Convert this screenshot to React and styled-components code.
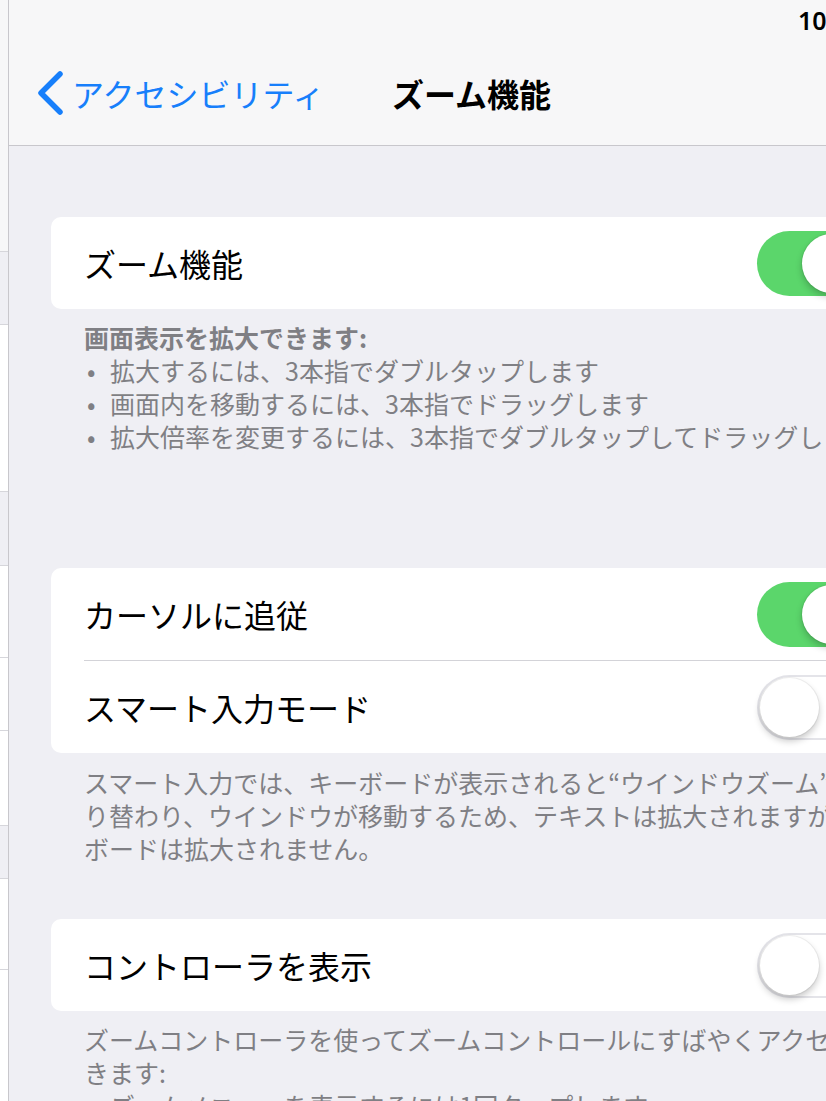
import React from 'react';
import styled, { createGlobalStyle } from 'styled-components';

const ios = {
    blue: '#177ffb',
    green: '#5bd66b',
    navBg: '#f7f7f8',
    groupBg: '#efeff4',
    line: '#c8c7cc',
    footer: '#7f7f84',
};

const GlobalStyle = createGlobalStyle`
    html, body {
        margin: 0;
        padding: 0;
        overflow: hidden;
        background: ${ios.groupBg};
    }
    body {
        font-family: "Noto Sans CJK JP", "Noto Sans", sans-serif;
        -webkit-font-smoothing: antialiased;
    }
`;

/* Whole screen: the thin master list on the left, detail pane on the right */
const Screen = styled.div`
    display: flex;
    height: 1101px;
    overflow: hidden;
`;

const MasterStrip = styled.div`
    flex: 0 0 8px;
    display: flex;
    flex-direction: column;
    border-right: 1px solid ${ios.line};
    background: #fff;
`;

const StripBlock = styled.div`
    box-sizing: border-box;
    height: ${(p) => p.$h}px;
    flex: 0 0 auto;
    background: ${(p) => p.$bg};
    border-bottom: 1px solid #d6d6db;
`;

const DetailPane = styled.div`
    flex: 0 0 925px;
    min-width: 0;
    overflow: hidden;
    display: flex;
    flex-direction: column;
    background: ${ios.groupBg};
`;

/* Navigation bar */
const NavBar = styled.header`
    box-sizing: border-box;
    height: 146px;
    background: ${ios.navBg};
    border-bottom: 1px solid ${ios.line};
    display: flex;
    flex-direction: column;
`;

const StatusRow = styled.div`
    height: 40px;
    display: flex;
    align-items: center;
    padding-left: 789px;
    font-family: "Noto Sans", "Liberation Sans", sans-serif;
    font-weight: 600;
    font-size: 25px;
    color: #000;
    white-space: nowrap;
`;

const NavRow = styled.div`
    height: 105px;
    display: grid;
    grid-template-columns: 1fr auto 1fr;
    align-items: center;
`;

const BackButton = styled.div`
    display: flex;
    align-items: center;
    gap: 8px;
    padding-left: 27px;
    color: ${ios.blue};
    font-size: 32px;
    white-space: nowrap;
`;

const NavTitle = styled.h1`
    margin: 0;
    font-size: 32px;
    font-weight: 700;
    color: #000;
    white-space: nowrap;
`;

/* Grouped table */
const Content = styled.main`
    padding: 71px 42px 0;
    display: flex;
    flex-direction: column;
    min-width: 0;
`;

const Card = styled.section`
    background: #fff;
    border-radius: 10px;
    overflow: hidden;
`;

const Row = styled.div`
    height: 92px;
    display: flex;
    align-items: center;
    justify-content: space-between;
    padding: 0 28px 0 33px;
`;

const RowLabel = styled.span`
    font-size: 32px;
    color: #000;
    white-space: nowrap;
`;

const Separator = styled.div`
    height: 1px;
    margin-left: 33px;
    background: #d3d3d8;
`;

const Footer = styled.div`
    padding: ${(p) => p.$top}px 33px 0;
    margin-bottom: ${(p) => p.$gap}px;
    min-width: 0;
    overflow: hidden;
    font-size: 25px;
    line-height: 33px;
    color: ${ios.footer};
`;

const FooterLine = styled.div`
    white-space: nowrap;
    font-weight: ${(p) => (p.$bold ? 700 : 400)};
`;

const Bullet = styled.div`
    display: flex;
    white-space: nowrap;

    &::before {
        content: '•';
        flex: 0 0 26px;
        padding-left: 3px;
        box-sizing: border-box;
    }
`;

/* Switch */
const Track = styled.div`
    box-sizing: border-box;
    flex: 0 0 107px;
    height: 65px;
    border-radius: 33px;
    padding: 3px;
    display: flex;
    justify-content: ${(p) => (p.$on ? 'flex-end' : 'flex-start')};
    background: ${(p) => (p.$on ? ios.green : '#fff')};
    box-shadow: ${(p) => (p.$on ? 'none' : 'inset 0 0 0 2px #e4e4e9')};
`;

const Knob = styled.div`
    width: 59px;
    height: 59px;
    border-radius: 50%;
    background: #fff;
    box-shadow: 0 4px 7px rgba(0, 0, 0, 0.22), 0 0 0 1px rgba(0, 0, 0, 0.05);
`;

const Toggle = ({ on }) => (
    <Track $on={on}>
        <Knob />
    </Track>
);

const Chevron = () => (
    <svg width="28" height="44" viewBox="0 0 28 44">
        <path
            d="M24 3 L5 22 L24 41"
            fill="none"
            stroke={ios.blue}
            strokeWidth="5.5"
            strokeLinecap="round"
            strokeLinejoin="round"
        />
    </svg>
);

const stripBlocks = [
    { h: 252, bg: ios.navBg },
    { h: 73, bg: ios.groupBg },
    { h: 167, bg: '#fff' },
    { h: 74, bg: ios.groupBg },
    { h: 92, bg: '#fff' },
    { h: 73, bg: '#fff' },
    { h: 95, bg: '#fff' },
    { h: 53, bg: ios.groupBg },
    { h: 91, bg: '#fff' },
];

export default function App() {
    return (
        <>
            <GlobalStyle />
            <Screen>
                <MasterStrip>
                    {stripBlocks.map((b, i) => (
                        <StripBlock key={i} $h={b.h} $bg={b.bg} />
                    ))}
                </MasterStrip>
                <DetailPane>
                    <NavBar>
                        <StatusRow>10:41</StatusRow>
                        <NavRow>
                            <BackButton>
                                <Chevron />
                                アクセシビリティ
                            </BackButton>
                            <NavTitle>ズーム機能</NavTitle>
                            <div />
                        </NavRow>
                    </NavBar>
                    <Content>
                        <Card>
                            <Row>
                                <RowLabel>ズーム機能</RowLabel>
                                <Toggle on />
                            </Row>
                        </Card>
                        <Footer $top={12} $gap={115}>
                            <FooterLine $bold>画面表示を拡大できます:</FooterLine>
                            <Bullet>拡大するには、3本指でダブルタップします</Bullet>
                            <Bullet>画面内を移動するには、3本指でドラッグします</Bullet>
                            <Bullet>拡大倍率を変更するには、3本指でダブルタップしてドラッグします</Bullet>
                        </Footer>

                        <Card>
                            <Row>
                                <RowLabel>カーソルに追従</RowLabel>
                                <Toggle on />
                            </Row>
                            <Separator />
                            <Row>
                                <RowLabel>スマート入力モード</RowLabel>
                                <Toggle />
                            </Row>
                        </Card>
                        <Footer $top={13} $gap={54}>
                            <FooterLine>スマート入力では、キーボードが表示されると“ウインドウズーム”に切</FooterLine>
                            <FooterLine>り替わり、ウインドウが移動するため、テキストは拡大されますがキー</FooterLine>
                            <FooterLine>ボードは拡大されません。</FooterLine>
                        </Footer>

                        <Card>
                            <Row>
                                <RowLabel>コントローラを表示</RowLabel>
                                <Toggle />
                            </Row>
                        </Card>
                        <Footer $top={12} $gap={0}>
                            <FooterLine>ズームコントローラを使ってズームコントロールにすばやくアクセスで</FooterLine>
                            <FooterLine>きます:</FooterLine>
                            <Bullet>ズームメニューを表示するには1回タップします</Bullet>
                        </Footer>
                    </Content>
                </DetailPane>
            </Screen>
        </>
    );
}
